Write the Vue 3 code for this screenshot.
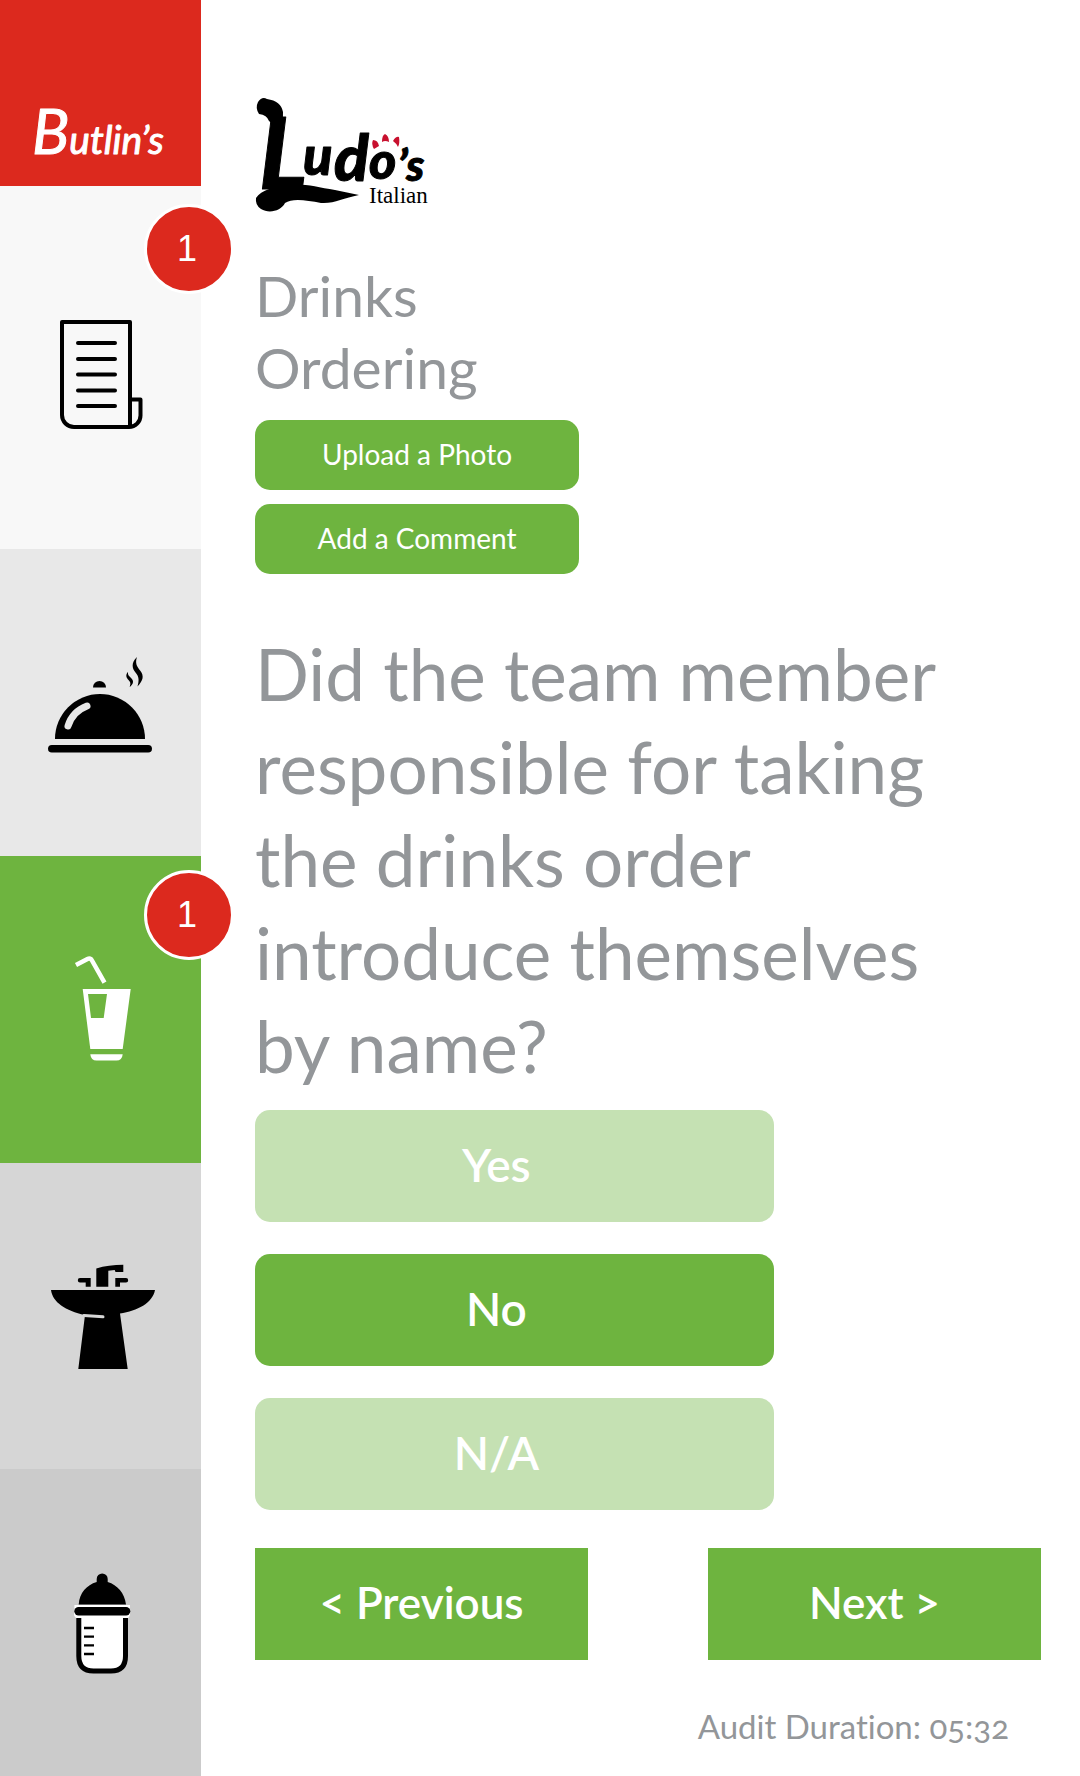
<script setup>
import { ref } from 'vue'

const sections = [
  { id: 'summary', label: 'Summary', badge: 1 },
  { id: 'food', label: 'Food' },
  { id: 'drinks', label: 'Drinks', badge: 1 },
  { id: 'washroom', label: 'Washroom' },
  { id: 'baby', label: 'Baby facilities' },
]
const active = ref('drinks')
const answers = ['Yes', 'No', 'N/A']
const answer = ref('No')
</script>

<template>
  <div class="page">
    <aside class="sidebar">
      <a class="brand" href="#" aria-label="Butlin's">
        <svg width="150" height="80" viewBox="0 0 150 80">
          <text class="brand-text" x="6" y="62"><tspan font-size="62">B</tspan><tspan font-size="39">utlin’s</tspan></text>
        </svg>
      </a>
      <nav class="sections">
        <button
          v-for="s in sections"
          :key="s.id"
          type="button"
          class="section"
          :class="[s.id, { active: active === s.id }]"
          :aria-label="s.label"
          @click="active = s.id"
        >
          <svg v-if="s.id === 'summary'" class="icon" viewBox="0 0 140 140" fill="none" stroke="#000" stroke-width="4" stroke-linecap="round" stroke-linejoin="round">
            <path d="M99 129V24H31V117a12 12 0 0 0 12 12H98a11.500 11.500 0 0 0 11.500-11.500V101.500H99" />
            <path d="M47 45H84M47 61H84M47 76.500H84M47 92.500H84M47 108H84" />
          </svg>
          <svg v-else-if="s.id === 'food'" class="icon" viewBox="0 0 140 140">
            <path d="M24 107a45 45 0 0 1 90 0Z" />
            <rect x="17" y="113" width="104" height="7.600" rx="3.800" />
            <path d="M62 55.600a6.500 6.700 0 0 1 13 0Z" />
            <path d="M37 94Q41.500 79.500 56 74" fill="none" stroke="#e8e8e8" stroke-width="7" stroke-linecap="round" />
            <path d="M106 25C99.500 31 101.500 37 104.500 40.500C108.500 45 108 49 106.500 54.600C112.500 48 113 44 109.500 39C105.500 34 104 31 106 25Z" />
            <path d="M97 40C94 43 95.500 46 97.500 48C100 50.500 99.500 52 98.700 55C102.500 52 103 49 100.500 46.500C98 44 96.500 43 97 40Z" />
          </svg>
          <svg v-else-if="s.id === 'drinks'" class="icon" viewBox="0 0 140 140" fill="#fff">
            <path d="M45 26L56.500 20Q59.500 18.500 61 21.500L73.500 43.600" fill="none" stroke="#fff" stroke-width="4.500" />
            <path fill-rule="evenodd" d="M51.700 50H99.700L91.700 110H59.300ZM57 55L60 79H72.700L76 55Z" />
            <path d="M59.300 115.200H91.700Q91 121.600 85.500 121.600H65.500Q60 121.600 59.300 115.200Z" />
          </svg>
          <svg v-else-if="s.id === 'washroom'" class="icon" viewBox="0 0 140 140">
            <path d="M20 44H124C121.500 57 106.500 65 89 67.400L96.700 123H47.300L54 69C34.500 65 21.500 56 20 44Z" />
            <path d="M53 69.600L72 70.800" stroke="#d6d6d6" stroke-width="3" stroke-linecap="round" />
            <path d="M65.300 22.400Q77.500 19 92.300 18.800V26H84.500L83.700 24L77.300 24.800V40.800H65.300Z" />
            <path d="M59.700 32V40.800H54.700V36.400H49a2.200 2.200 0 0 1 0-4.400ZM84.300 32V40.800H89V36.400H95a2.200 2.200 0 0 0 0-4.400Z" />
          </svg>
          <svg v-else class="icon" viewBox="0 0 140 140">
            <path d="M43.500 52H99V62Q97.500 66 94.500 66H48.500Q44.500 66 43 62Z" fill="#fff" />
            <path d="M47.700 51.400C48.500 40 55.500 32 65.700 29V26a5.500 5.500 0 0 1 11 0V29C86.500 32 93.500 40 95 51.400Z" />
            <rect x="43.300" y="54" width="56" height="8.400" rx="4.200" />
            <path d="M47.800 65V103Q47.800 118 62.500 118H80Q94.500 118 94.500 103V65" fill="#fff" stroke="#000" stroke-width="5" />
            <path d="M53 75H63M53 83.700H63M53 92.400H63M53 101H63" stroke="#000" stroke-width="2.300" />
          </svg>
          <span v-if="s.badge" class="badge">{{ s.badge }}</span>
        </button>
      </nav>
    </aside>

    <main class="main">
      <svg class="venue" width="176" height="116" viewBox="0 0 176 116" role="img" aria-label="Ludo's Italian">
        <g class="venue-text">
          <text x="4" y="92" font-size="100">L</text>
          <text x="48" y="78" font-size="54">u</text>
          <text x="79" y="84" font-size="64">d</text>
          <text x="114" y="82" font-size="52">o</text>
          <text x="143" y="84" font-size="44">’s</text>
        </g>
        <path d="M3 5Q7 -1 12 2Q26 4 28 15Q29 25 21 30L14 24Q12 18 4 17Q0 11 3 5Z" />
        <path d="M1 101C6 93 20 89 34 88C48 86 62 90 80 93L104 98C88 101 79 107 66 106C51 103 37 101 30 106C26 114 14 117 6 112Q0 108 1 101Z" />
        <g fill="#c8102e">
          <path d="M118 43Q123 43 124 49L119 52Q116 47 118 43Z" />
          <path d="M127 45Q127 38 130 37Q134 39 134 45Q130 43 127 45Z" />
          <path d="M138 44Q141 39 144 40Q145 46 143 50Q141 46 138 44Z" />
        </g>
        <text class="venue-sub" x="114" y="106">Italian</text>
      </svg>

      <div class="tools">
        <h1>Drinks Ordering</h1>
        <button type="button" class="tool">Upload a Photo</button>
        <button type="button" class="tool">Add a Comment</button>
      </div>

      <h2>Did the team member responsible for taking the drinks order introduce themselves by name?</h2>

      <div class="answers">
        <button
          v-for="a in answers"
          :key="a"
          type="button"
          class="answer"
          :class="{ chosen: answer === a }"
          :aria-pressed="answer === a"
          @click="answer = a"
        >{{ a }}</button>
      </div>

      <div class="pager">
        <button type="button">&lt; Previous</button>
        <button type="button">Next &gt;</button>
      </div>

      <p class="duration">Audit Duration: 05:32</p>
    </main>
  </div>
</template>

<style>
body {
  margin: 0;
  background: #fff;
}
</style>

<style scoped>
.page {
  display: grid;
  grid-template-columns: 201px 1fr;
  min-height: 100vh;
  font-family: Lato, "Liberation Sans", sans-serif;
  font-variant-ligatures: none;
  color: #939699;
}
button {
  border: 0;
  margin: 0;
  padding: 0;
  font-family: inherit;
  color: #fff;
  background: #6eb43f;
  cursor: pointer;
}
.sidebar {
  display: flex;
  flex-direction: column;
}
.brand {
  display: flex;
  align-items: flex-end;
  justify-content: center;
  box-sizing: border-box;
  height: 186px;
  padding-bottom: 14px;
  background: #dc291e;
}
.brand-text {
  font-family: Lato, sans-serif;
  font-style: italic;
  fill: #fff;
  stroke: #fff;
  stroke-width: 1;
  stroke-linejoin: round;
}
.sections {
  flex: 1;
  display: flex;
  flex-direction: column;
}
.section {
  position: relative;
  flex: 1;
  min-height: 240px;
  display: flex;
  align-items: center;
  justify-content: center;
}
.section.summary {
  flex: none;
  height: 363px;
  background: #f8f8f8;
}
.section.food { background: #e8e8e8; }
.section.drinks { background: #6eb43f; }
.section.washroom { background: #d6d6d6; }
.section.baby { background: #cbcbcb; }
.icon {
  width: 140px;
  height: 140px;
}
.badge {
  position: absolute;
  top: 14px;
  right: -33px;
  box-sizing: border-box;
  width: 90px;
  height: 90px;
  padding-right: 4px;
  border: 3px solid #fff;
  border-radius: 50%;
  background: #dc291e;
  font: 36px/84px "Liberation Sans", sans-serif;
  text-align: center;
}
.summary .badge { top: 18px; }
.main {
  padding: 97px 39px 29px 54px;
}
.venue {
  display: block;
  overflow: visible;
}
.venue-text {
  font-family: Lato, sans-serif;
  font-weight: 900;
  font-style: italic;
  stroke: #000;
  stroke-width: 1;
  stroke-linejoin: round;
}
.venue-sub {
  font: 23px "Liberation Serif", serif;
}
.tools {
  display: flex;
  flex-direction: column;
  gap: 14px;
  width: 324px;
  margin-top: 46px;
}
h1 {
  margin: 0 0 3px;
  font-size: 57px;
  line-height: 72px;
  font-weight: 400;
}
.tool {
  height: 70px;
  padding-bottom: 2px;
  border-radius: 15px;
  font-size: 28px;
}
h2 {
  max-width: 700px;
  margin: 53px 0 18px;
  font-size: 71px;
  line-height: 93px;
  font-weight: 400;
}
.answers {
  display: flex;
  flex-direction: column;
  gap: 32px;
  width: 66%;
}
.answer {
  height: 112px;
  padding: 0 36px 4px 0;
  border-radius: 15px;
  background: #c5e1b3;
  font-size: 46px;
  font-weight: 600;
}
.answer.chosen { background: #6eb43f; }
.pager {
  display: flex;
  justify-content: space-between;
  gap: 32px;
  margin-top: 38px;
}
.pager button {
  flex: 0 1 333px;
  height: 112px;
  padding-bottom: 4px;
  font-size: 44px;
  font-weight: 600;
}
.duration {
  margin: 45px 0 0;
  padding-right: 32px;
  font-size: 33px;
  line-height: 42px;
  text-align: right;
  font-variant-numeric: oldstyle-nums;
}
</style>
